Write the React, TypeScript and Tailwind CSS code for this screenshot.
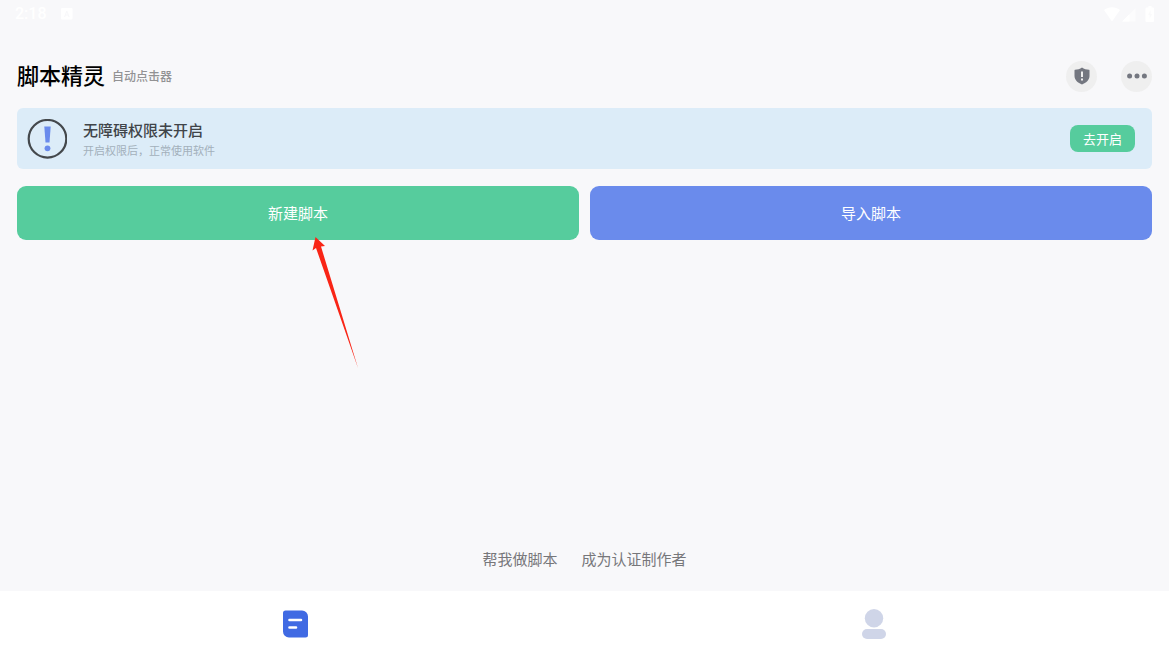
import type { ReactNode } from "react";

interface RoundButtonProps {
  label: string;
  children: ReactNode;
}

function RoundButton({ label, children }: RoundButtonProps) {
  return (
    <button
      aria-label={label}
      className="flex size-[31px] cursor-pointer items-center justify-center rounded-full bg-[#efefef]"
      type="button"
    >
      {children}
    </button>
  );
}

function StatusBar() {
  return (
    <div className="flex h-7 items-center justify-between px-[15px] text-white">
      <div className="flex items-center gap-3.5">
        <span className="font-[Roboto,sans-serif] text-base font-medium">2:18</span>
        <svg className="size-3" fill="none" viewBox="0 0 12 12">
          <rect fill="currentColor" height="11.500" rx="1" width="11.500" />
          <path d="M3.600 9 5.800 3 8 9M4.500 7h2.600" stroke="#f8f8fa" strokeWidth="1" />
        </svg>
      </div>
      <svg className="h-4 w-[50px]" fill="currentColor" viewBox="0 0 50 16">
        <path d="M0 4C5 .3 11 .3 16 4L8 15.500Z" />
        <path d="M18 15.500 31.500 2v13.500Z" opacity=".5" />
        <path d="M18 15.500 25.500 8v7.500Z" />
        <path d="M42.500 1.500h2V0h3v1.500H49a1 1 0 0 1 1 1V15a1 1 0 0 1-1 1h-6.500a1 1 0 0 1-1-1V2.500a1 1 0 0 1 1-1Z" />
        <path d="m46.500 4-2.500 5h1.600v4L48 8h-1.500Z" fill="#f8f8fa" opacity=".7" />
      </svg>
    </div>
  );
}

function Header() {
  return (
    <header className="flex items-center justify-between">
      <div className="flex items-center gap-[7px] pb-1">
        <h1 className="text-[22px] leading-7 font-medium text-black">脚本精灵</h1>
        <p className="pt-1 text-xs leading-4 font-medium text-[#929294]">自动点击器</p>
      </div>
      <div className="flex gap-6">
        <RoundButton label="安全提示">
          <svg className="h-[18px] w-4" viewBox="0 0 16 18">
            <path
              d="M8 .5C10 2 12.500 2.700 15 2.800q.5 0 .5.6V9c0 4-3.500 7-7.500 8.500C4 16 .5 13 .5 9V3.400q0-.6.5-.6C3.500 2.700 6 2 8 .5Z"
              fill="#747780"
            />
            <path d="M7 4.500h2V10H7Zm0 7h2v2H7Z" fill="#efefef" />
          </svg>
        </RoundButton>
        <RoundButton label="更多">
          <svg className="h-1.5 w-5" fill="#747780" viewBox="0 0 20 6">
            <circle cx="2.600" cy="3" r="2.500" />
            <circle cx="10" cy="3" r="2.500" />
            <circle cx="17.400" cy="3" r="2.500" />
          </svg>
        </RoundButton>
      </div>
    </header>
  );
}

function PermissionBanner() {
  return (
    <section className="mt-4 flex h-[61px] items-center rounded-md bg-[#dcecf8] pr-[17px] pl-2.5">
      <svg className="size-10" viewBox="0 0 40 40">
        <circle cx="20.500" cy="19.800" fill="none" r="18.800" stroke="#44484c" strokeWidth="2.200" />
        <path d="M17.300 7.500h6.400L22.500 23.500h-4Z" fill="#6a8bec" />
        <circle cx="20.500" cy="29.300" fill="#6a8bec" r="2.900" />
      </svg>
      <div className="ml-4 flex-1 pb-0.5">
        <h2 className="text-[15px] leading-6 font-medium text-[#404449]">无障碍权限未开启</h2>
        <p className="text-[11px] leading-4 text-[#a3b0bb]">开启权限后，正常使用软件</p>
      </div>
      <button
        className="h-[27px] cursor-pointer rounded-lg bg-[#56cc9d] px-[13px] text-[13px] leading-5 text-white"
        type="button"
      >
        去开启
      </button>
    </section>
  );
}

function GuideArrow() {
  return (
    <svg
      aria-hidden="true"
      className="pointer-events-none absolute top-[51px] left-1/2 ml-3.5 h-[132px] w-[47px]"
      fill="#f92516"
      viewBox="0 0 47 132"
    >
      <path d="M3.500 0 13 9 9 9.500 46 131 4 11 .5 13.500Z" />
    </svg>
  );
}

export default function App() {
  return (
    <div className="flex min-h-screen flex-col bg-[#f8f8fa] font-['Noto_Sans_CJK_SC',sans-serif]">
      <StatusBar />

      <main className="flex flex-1 flex-col px-[17px] pt-8">
        <Header />
        <PermissionBanner />

        <div className="mt-[17px] grid grid-cols-2 gap-[11px]">
          <button
            className="relative h-[54px] cursor-pointer rounded-[9px] bg-[#56cc9d] text-[15px] text-white"
            type="button"
          >
            新建脚本
            <GuideArrow />
          </button>
          <button
            className="h-[54px] cursor-pointer rounded-[9px] bg-[#6a8bec] text-[15px] text-white"
            type="button"
          >
            导入脚本
          </button>
        </div>

        <div className="mt-auto flex justify-center gap-6 pb-5 text-[15px] leading-6 text-[#77777a]">
          <a href="#request">帮我做脚本</a>
          <a href="#creator">成为认证制作者</a>
        </div>
      </main>

      <nav className="grid h-[66px] grid-cols-2 bg-white px-1.5">
        <a aria-label="脚本" className="flex items-center justify-center" href="#scripts">
          <svg className="h-7 w-[26px]" viewBox="0 0 26 28">
            <path
              d="M3.500.5H20a6 6 0 0 1 6 6V25a2.500 2.500 0 0 1-2.500 2.500H7A6 6 0 0 1 1 21.500V3A2.500 2.500 0 0 1 3.500.5Z"
              fill="#406ae3"
            />
            <path d="M7.500 10h11.500M7.500 17.500h6.500" stroke="#fff" strokeLinecap="round" strokeWidth="2.600" />
          </svg>
        </a>
        <a aria-label="我的" className="flex items-center justify-center" href="#profile">
          <svg className="h-[30px] w-6" fill="#cfd5e8" viewBox="0 0 24 30">
            <circle cx="12" cy="9.300" r="9.200" />
            <rect height="10" rx="5" width="24" y="20" />
          </svg>
        </a>
      </nav>
    </div>
  );
}
